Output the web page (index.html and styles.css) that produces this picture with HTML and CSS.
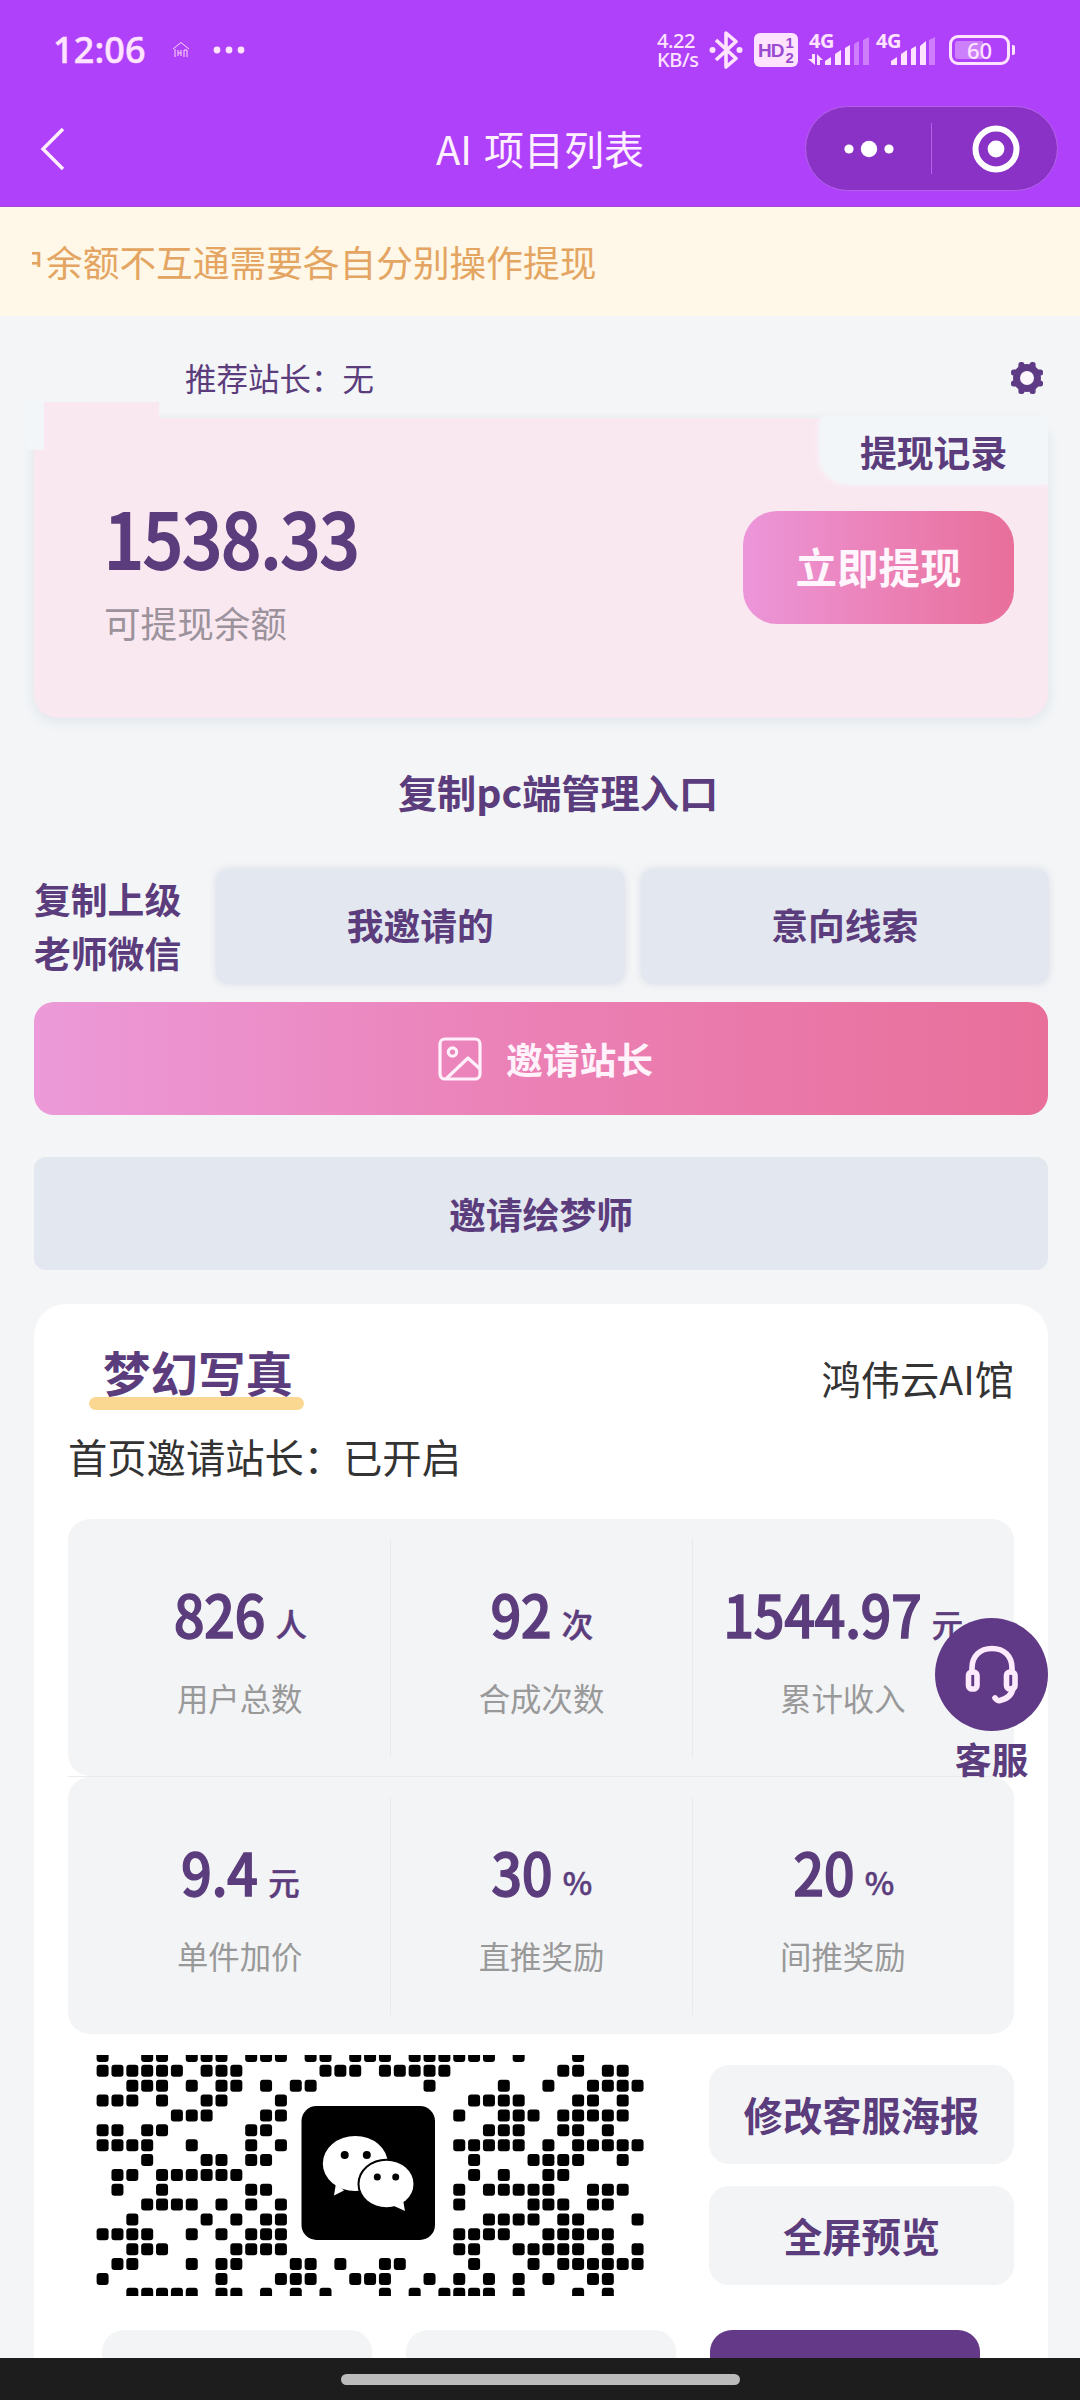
FILE: index.html
```html
<!DOCTYPE html>
<html lang="zh-CN">
<head>
<meta charset="utf-8">
<title>AI 项目列表</title>
<link rel="stylesheet" href="styles.css">
</head>
<body>
<div class="screen">
  <header class="top">
    <div class="status">
      <span class="clock">12:06</span>
      <svg class="house" width="18" height="18" viewBox="0 0 18 18" fill="none" stroke="#ffd9f6" stroke-width="1"><path d="M1 8 9 1.5 17 8M3 8v8M6 9v6M6 12h3M9 9v6M12 16V9h3v7"/></svg>
      <svg class="more" width="32" height="8" viewBox="0 0 32 8" fill="#ffe3ff"><circle cx="4" cy="4" r="3.4"/><circle cx="16" cy="4" r="3.4"/><circle cx="28" cy="4" r="3.4"/></svg>
      <div class="speed"><span>4.22</span><span>KB/s</span></div>
      <svg class="bt" width="34" height="38" viewBox="0 0 34 38" fill="none" stroke="#ffe3ff" stroke-width="3.6" stroke-linejoin="round"><path d="M7 9 27 27.500 17 36V2l10 8.500L7 29"/><circle cx="3.5" cy="19" r="3" fill="#ffe3ff" stroke="none"/><circle cx="30.5" cy="19" r="3" fill="#ffe3ff" stroke="none"/></svg>
      <span class="hd"><b>HD</b><span class="hd-sim"><i>1</i><i>2</i></span></span>
      <span class="signal signal-a"><b>4G</b>
        <svg width="62" height="32" viewBox="0 0 62 32" fill="#ffe3ff"><path d="M4 20h3v11L0 25h4zM9 31V20l6 6h-3v5z"/><path d="M17 31v-4l6-4v8zM27 31V20l6-4v15zM37 31V14l5-3v20z"/><path d="M46 31V10l5-3v24zM55 31V6l6-3v28z" opacity=".38"/></svg></span>
      <span class="signal signal-b"><b>4G</b>
        <svg width="62" height="32" viewBox="0 0 62 32" fill="#ffe3ff"><path d="M16 31v-4l6-4v8zM26 31V20l6-4v15zM36 31V15l5-3v19zM45 31V12l6-5v24z"/><path d="M54 31V6l6-3v28z" opacity=".38"/></svg></span>
      <span class="battery"><span>60</span></span><span class="nub"></span>
    </div>
    <div class="nav">
      <svg class="back" width="26" height="44" viewBox="0 0 26 44" fill="none" stroke="#fff0ff" stroke-width="3.4"><path d="M23 2 3 22l20 20"/></svg>
      <h1>AI 项目列表</h1>
      <div class="capsule">
        <svg width="50" height="20" viewBox="0 0 50 20" fill="#fff"><circle cx="5" cy="10" r="4.6"/><circle cx="25" cy="10" r="8.2"/><circle cx="45" cy="10" r="4.6"/></svg>
        <span class="bar"></span>
        <svg width="48" height="48" viewBox="0 0 48 48"><circle cx="24" cy="24" r="20.5" fill="none" stroke="#fff" stroke-width="6"/><circle cx="24" cy="24" r="8.4" fill="#fff"/></svg>
      </div>
    </div>
  </header>
  <div class="notice"><div class="marquee"><span>户余额不互通需要各自分别操作提现</span></div></div>

  <main>
    <div class="referrer"><span>推荐站长：无</span>
      <svg width="34" height="34" viewBox="-17 -17 34 34"><g fill="#5f3b86"><circle r="14"/><rect x="-8.6" y="-16" width="6" height="32" rx="2.500"/><rect x="2.6" y="-16" width="6" height="32" rx="2.500"/><rect x="-16" y="-8.6" width="32" height="6" rx="2.500"/><rect x="-16" y="2.6" width="32" height="6" rx="2.500"/></g><circle r="7" fill="#fdf6fc"/></svg>
    </div>
    <section class="balance">
      <div class="balance-info"><strong>1538.33</strong><span>可提现余额</span></div>
      <button class="withdraw">立即提现</button>
      <a class="records">提现记录</a>
    </section>
    <a class="pc-entry">复制pc端管理入口</a>
    <div class="links">
      <a class="teacher">复制上级<br>老师微信</a>
      <button class="soft">我邀请的</button>
      <button class="soft">意向线索</button>
    </div>
    <button class="invite">
      <svg width="44" height="44" viewBox="0 0 44 44" fill="none" stroke="#fff0fb" stroke-width="3.2" stroke-linejoin="round" stroke-linecap="round"><rect x="2" y="2" width="40" height="40" rx="5"/><circle cx="14.5" cy="15" r="4.2"/><path d="M9 41 30 21l11 10"/></svg>
      邀请站长</button>
    <button class="painter">邀请绘梦师</button>

    <section class="project">
      <div class="project-head"><h2>梦幻写真</h2><span>鸿伟云AI馆</span></div>
      <p>首页邀请站长：已开启</p>
      <div class="stats">
        <div><b>826 <small>人</small></b><span>用户总数</span></div>
        <div><b>92 <small>次</small></b><span>合成次数</span></div>
        <div><b>1544.97 <small>元</small></b><span>累计收入</span></div>
      </div>
      <div class="seam"></div>
      <div class="stats">
        <div><b>9.4 <small>元</small></b><span>单件加价</span></div>
        <div><b>30 <small>%</small></b><span>直推奖励</span></div>
        <div><b>20 <small>%</small></b><span>间推奖励</span></div>
      </div>
      <div class="poster">
        <svg class="qr" width="548" height="241" viewBox="96 2055 548 241">
          <g id="modules"></g>
          <rect x="301.5" y="2106" width="133.5" height="134" rx="15"/>
          <g fill="#fff">
            <path d="M336 2183 334 2195.500 344 2190.500z"/>
            <ellipse cx="355.300" cy="2163.500" rx="32.500" ry="27.500"/>
            <ellipse cx="386.500" cy="2184" rx="27" ry="23.200" stroke="#000" stroke-width="4" paint-order="stroke"/>
            <path d="M394 2206 405 2211 403 2200z"/>
          </g>
          <circle cx="344.700" cy="2155" r="4"/><circle cx="366.800" cy="2155" r="4"/>
          <circle cx="377.300" cy="2177" r="3.500"/><circle cx="395.700" cy="2177" r="3.500"/>
        </svg>
        <div class="poster-actions"><button>修改客服海报</button><button>全屏预览</button></div>
      </div>
      <div class="tabs"><span></span><span></span><span class="active"></span></div>
    </section>
  </main>

  <a class="service">
    <span class="service-icon"><svg width="56" height="60" viewBox="0 0 56 60" fill="none" stroke="#fdeafd" stroke-width="5.600" stroke-linecap="round" stroke-linejoin="round"><path d="M8 27V23C8 11 16 3.500 28 3.500S48 11 48 23v4"/><rect x="4.500" y="27" width="8.500" height="17" rx="3.500"/><rect x="42.500" y="27" width="8.500" height="17" rx="3.500"/><path d="M49 43c-1 7-7 11-13 12.500-2 .5-3 0-5-2.500"/></svg></span>
    <span>客服</span>
  </a>
  <footer><span></span></footer>
</div>
<script src="qr.js"></script>
</body>
</html>
```
FILE: styles.css
```css
* { box-sizing: border-box; }
body { margin: 0; }
.screen {
  position: relative;
  width: 1080px; height: 2400px; overflow: hidden;
  display: flex; flex-direction: column;
  background: #f3f5f7; color: #5b3c7c;
  font-family: "Noto Sans CJK SC", "Noto Sans", sans-serif;
}
button {
  border: 0; padding: 0; margin: 0;
  font: 700 36.8px/1 "Noto Sans CJK SC", sans-serif;
  color: #5b3c7c;
  display: flex; align-items: center; justify-content: center;
}
h1, h2, p { margin: 0; }

/* status bar */
.top { height: 207px; flex: none; background: #b041fa; border-bottom: 1px solid #a447d8; }
.status { height: 100px; display: flex; align-items: center; padding-left: 53px; color: #ffe3ff; }
.clock { font: 500 36px/1 "Noto Sans", sans-serif; width: 119px; letter-spacing: .1px; -webkit-text-stroke: .5px currentColor; }
.house { margin-right: 23px; }
.more { width: 32px; margin-right: 412px; flex: none; }
.speed { width: 49px; display: flex; flex-direction: column; font: 500 20px/19px "Noto Sans", sans-serif; letter-spacing: -.4px; }
.status svg { flex: none; }
.bt { margin-left: 3px; margin-right: 11px; }
.hd {
  width: 44px; height: 34px; border-radius: 6px; background: #ffe3ff; color: #9a4bd0;
  display: flex; align-items: center; justify-content: center; flex: none;
}
.hd b { font: 700 19px/1 "Liberation Sans", sans-serif; letter-spacing: -1px; }
.hd-sim { display: flex; flex-direction: column; }
.hd-sim i { font: 700 15px/15px "Liberation Sans", sans-serif; margin-left: 2px; }
.signal { display: grid; width: 66px; flex: none; }
.signal > * { grid-area: 1 / 1; }
.signal b { font: 700 20px/14px "Noto Sans", sans-serif; padding-left: 1px; letter-spacing: -.5px; }
.signal-a { margin-left: 10px; }
.signal-b { margin-left: 1px; }
.signal svg { align-self: end; }
.battery {
  width: 61px; height: 30px; margin-left: 8px; border: 3px solid #ffe3ff; border-radius: 9px; padding: 3px; flex: none;
}
.battery span {
  display: block; height: 100%; border-radius: 3px; text-align: center;
  background: linear-gradient(90deg, #cd80fb 58%, transparent 58%);
  font: 500 22px/18px "Noto Sans", sans-serif;
}
.nub { width: 3px; height: 10px; margin-left: 2px; background: #ffe3ff; border-radius: 0 2px 2px 0; }

/* title bar */
.nav { height: 97px; display: grid; grid-template-columns: 275px 530px 275px; align-items: center; }
.back { margin-left: 40px; }
.nav h1 { font-weight: 400; font-size: 40px; line-height: 1; color: #fff0ff; text-align: center; word-spacing: 3px; padding-bottom: 2px; }
.capsule {
  width: 253px; height: 85px; border-radius: 43px; background: #8b32c6; border: 1px solid #b262e8;
  display: flex; align-items: center;
}
.capsule svg:first-child { margin-left: 38px; }
.capsule .bar { width: 1px; height: 51px; background: #b262e8; margin: 0 40px 0 37px; }

.notice { height: 109px; flex: none; background: #fff7e7; display: flex; align-items: center; padding: 0 32px 2px; }
.marquee { flex: 1; overflow: hidden; display: flex; }
.marquee span { margin-left: -22.7px; font-size: 36.7px; line-height: 54px; color: #e3a561; white-space: nowrap; }

main { padding: 0 32px 0 34px; height: 2042px; overflow: hidden; flex: none; display: flex; flex-direction: column; }
.referrer { height: 102px; padding: 22px 4px 0 151px; display: flex; align-items: center; justify-content: space-between; flex: none; font-size: 31.5px; }
.referrer span { margin-top: -3px; }

/* balance card */
.balance {
  position: relative; flex: none; height: 300px; border-radius: 24px; background: #fae8f1;
  box-shadow: 0 3px 12px rgba(150, 170, 180, .22);
  display: flex; align-items: flex-start; justify-content: space-between;
  padding: 93px 34px 0 70px;
}
.balance::before { content: ""; position: absolute; left: -8px; top: -20px; width: 60px; height: 52px; background: #f3f6f8; }
.balance::after { content: ""; position: absolute; left: 10px; top: -16px; width: 115px; height: 60px; background: #fae8f1; }
.balance-info { display: flex; flex-direction: column; position: relative; z-index: 1; }
.balance-info strong {
  font-size: 76px; line-height: 78px; font-weight: 500; letter-spacing: -.8px; margin-top: -14px;
  -webkit-text-stroke: 1.8px currentColor;
  transform: scaleX(.92); transform-origin: left;
}
.balance-info span { font-size: 36.6px; line-height: 54px; margin-top: 21px; color: #9b929b; }
.withdraw {
  width: 271px; height: 113px; border-radius: 34px; color: #fff5fc; font-size: 41.5px; padding-bottom: 1px;
  background: linear-gradient(90deg, #ec96da, #eb80b5 55%, #e86f9a);
}
.records {
  position: absolute; right: 0; top: -2px; width: 228px; height: 68px; padding-left: 40px;
  background: #f3f6f8; border-radius: 8px 0 0 30px; font-size: 36.8px; line-height: 71px; font-weight: 700;
  box-shadow: -2px 1px 4px #f3f6f8;
}

.pc-entry { height: 149px; flex: none; display: flex; align-items: center; justify-content: center; font-size: 39.2px; font-weight: 700; padding: 0 0 4px 34px; }
.links { height: 135px; flex: none; display: flex; align-items: flex-start; gap: 18px; }
.teacher { width: 165px; padding-top: 5px; font-size: 36.8px; font-weight: 700; line-height: 53.6px; flex: none; }
.soft { flex: 1; height: 113px; margin-top: 2px; padding-bottom: 2px; border-radius: 10px; background: #e3e7ef; box-shadow: 0 1px 9px rgba(190, 197, 212, .6); }
.invite {
  width: 1014px; height: 113px; flex: none; border-radius: 20px; gap: 24px; padding-left: 9px; color: #fff2fb;
  background: linear-gradient(90deg, #ec9ad9, #eb80b5 50%, #e86f9a);
}
.painter { width: 1014px; height: 113px; flex: none; margin-top: 42px; border-radius: 12px; background: #e3e7ef; }

/* project card */
.project { width: 1014px; height: 1100px; flex: none; margin-top: 34px; padding: 0 34px; background: #fff; border-radius: 32px 32px 0 0; }
.project-head { height: 122px; display: flex; justify-content: space-between; padding-left: 21px; }
.project-head h2 {
  position: relative; z-index: 0;
  width: 215px; height: 106px; padding: 33px 0 0 14px; font-size: 47.5px; line-height: 70px; font-weight: 700; white-space: nowrap;
}
.project-head h2::after {
  content: ""; position: absolute; z-index: -1; left: 0; bottom: 0;
  width: 215px; height: 13px; border-radius: 7px; background: #fad891;
}
.project-head span { font-size: 39.3px; line-height: 58px; padding-top: 45px; color: #333; }
.project p { font-size: 39.3px; line-height: 58px; color: #333; height: 93px; padding-top: 1px; }
.stats {
  height: 257px; padding: 0 21px; border-radius: 22px; background: #f3f4f6;
  display: grid; grid-template-columns: repeat(3, 1fr); align-items: center;
}
.seam { height: 1px; background: #eaebee; }
.stats > div { height: 218px; display: flex; flex-direction: column; align-items: center; }
.stats > div + div { border-left: 1px solid #e8eaed; }
.stats b {
  font-size: 59px; line-height: 80px; font-weight: 500; letter-spacing: -.6px; white-space: nowrap; padding-top: 34px;
  -webkit-text-stroke: 1.3px currentColor;
  transform: scaleX(.92);
}
.stats small {
  display: inline-block; font-size: 31.4px; letter-spacing: 0; -webkit-text-stroke: .5px currentColor;
  line-height: 1; transform: translateY(-1px) scaleX(1.087);
}
.stats span { font-size: 31.4px; line-height: 46px; color: #999; margin-top: 22px; }

.poster { display: flex; justify-content: space-between; height: 295px; padding-top: 3px; }
.qr { margin: 18px 0 0 28px; }
.poster-actions { display: flex; flex-direction: column; gap: 22px; padding-top: 28px; }
.poster-actions button { width: 305px; height: 99px; border-radius: 20px; background: #f3f4f6; font-size: 39.3px; padding-bottom: 2px; }
.tabs { display: flex; gap: 34px; padding: 1px 0 0 34px; }
.tabs span { width: 270px; height: 90px; border-radius: 22px; background: #f3f4f5; }
.tabs .active { background: #643987; }

.service { position: absolute; left: 935px; top: 1618px; width: 113px; display: flex; flex-direction: column; align-items: center; font-size: 36.8px; line-height: 54px; font-weight: 700; }
.service-icon { width: 113px; height: 113px; border-radius: 50%; background: #613a87; display: flex; align-items: center; justify-content: center; }

footer { height: 42px; flex: none; background: #1d1d1e; display: flex; justify-content: center; padding-top: 16px; }
footer span { width: 399px; height: 11px; border-radius: 6px; background: #bbbbbc; }
```
FILE: qr.js
```js
// Column indexes of the dark modules, one entry per visible row.
const rows = [
  "0 3 4 6 7 8 10 11 12 14 15 17 18 19 21 22 23 24 25 26 28 32",
  "0 1 2 3 4 5 7 8 9 15 16 17 19 20 21 22 23 31 32 34 35",
  "2 3 4 6 8 9 11 13 14 22 27 30 33 34 35 36",
  "0 1 2 4 7 8 12 25 26 27 28 32 33 35",
  "5 6 7 11 12 24 27 28 29 31 32 33 34 35",
  "0 1 3 4 10 11 26 27 28 31 32 34",
  "0 1 2 3 6 10 12 24 25 26 27 28 30 32 33 34 35 36",
  "3 7 8 10 11 25 29 30 31 32 35",
  "1 2 4 5 6 7 8 9 25 27 30 31",
  "1 4 10 11 24 26 27 28 29 30 33 34 35",
  "3 4 5 6 8 10 12 24 29 30 31 33 34",
  "2 7 9 11 12 26 27 28 29 31 32 36",
  "0 1 2 3 6 8 10 11 12 24 25 26 27 30 31 32 33 34",
  "2 3 4 9 10 11 12 24 25 28 29 30 31 32 34 36",
  "1 2 6 8 9 13 14 16 19 20 25 29 31 32 33 34 35 36",
  "0 8 12 13 14 17 18 19 22 24 26 28 30 33 34",
  "2 3 4 5 6 8 9 11 13 15 19 21 23 24 25 26 28 32 34"
];
const pitch = 14.86;
document.getElementById("modules").innerHTML = rows.map((row, r) =>
  row.split(" ").map(c =>
    `<rect x="${(96.6 + c * pitch).toFixed(2)}" y="${(2050 + r * pitch).toFixed(2)}" width="12" height="12" rx="3"/>`
  ).join("")).join("");
```
